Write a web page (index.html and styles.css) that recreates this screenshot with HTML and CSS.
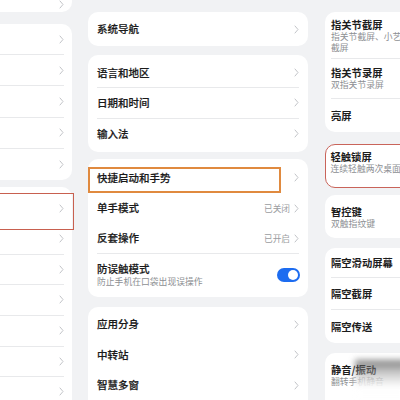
FILE: index.html
```html
<!DOCTYPE html>
<html lang="zh-CN">
<head>
<meta charset="utf-8">
<title>设置</title>
<link rel="stylesheet" href="styles.css">
</head>
<body>
<div class="screen">
  <!-- left panel (cut off) -->
  <div class="col col-left">
    <div class="card lc1">
      <div class="lrow"><svg class="chev" viewBox="0 0 5 9"><path d="M1 1L4 4.5L1 8"/></svg></div>
    </div>
    <div class="card lc2">
      <div class="lrow sep"><svg class="chev" viewBox="0 0 5 9"><path d="M1 1L4 4.5L1 8"/></svg></div>
      <div class="lrow sep"><svg class="chev" viewBox="0 0 5 9"><path d="M1 1L4 4.5L1 8"/></svg></div>
      <div class="lrow sep"><svg class="chev" viewBox="0 0 5 9"><path d="M1 1L4 4.5L1 8"/></svg></div>
      <div class="lrow sep"><svg class="chev" viewBox="0 0 5 9"><path d="M1 1L4 4.5L1 8"/></svg></div>
      <div class="lrow"><svg class="chev" viewBox="0 0 5 9"><path d="M1 1L4 4.5L1 8"/></svg></div>
    </div>
    <div class="card lc3">
      <div class="mark mark-left"></div>
      <div class="lrow h31"><svg class="chev" viewBox="0 0 5 9"><path d="M1 1L4 4.5L1 8"/></svg></div>
      <div class="lrow h31 sep"><svg class="chev" viewBox="0 0 5 9"><path d="M1 1L4 4.5L1 8"/></svg></div>
      <div class="lrow h30 sep"><svg class="chev" viewBox="0 0 5 9"><path d="M1 1L4 4.5L1 8"/></svg></div>
      <div class="lrow h31 sep"><svg class="chev" viewBox="0 0 5 9"><path d="M1 1L4 4.5L1 8"/></svg></div>
      <div class="lrow h31 sep"><svg class="chev" viewBox="0 0 5 9"><path d="M1 1L4 4.5L1 8"/></svg></div>
      <div class="lrow h30 sep"><svg class="chev" viewBox="0 0 5 9"><path d="M1 1L4 4.5L1 8"/></svg></div>
      <div class="lrow h30"><svg class="chev" viewBox="0 0 5 9"><path d="M1 1L4 4.5L1 8"/></svg></div>
    </div>
  </div>

  <!-- middle panel -->
  <div class="col col-mid">
    <div class="card mc1">
      <div class="mrow h34"><span class="label">系统导航</span><svg class="chev" viewBox="0 0 5 9"><path d="M1 1L4 4.5L1 8"/></svg></div>
    </div>
    <div class="card mc2">
      <div class="mrow h30 sep"><span class="label">语言和地区</span><svg class="chev" viewBox="0 0 5 9"><path d="M1 1L4 4.5L1 8"/></svg></div>
      <div class="mrow h30 sep"><span class="label">日期和时间</span><svg class="chev" viewBox="0 0 5 9"><path d="M1 1L4 4.5L1 8"/></svg></div>
      <div class="mrow h30"><span class="label">输入法</span><svg class="chev" viewBox="0 0 5 9"><path d="M1 1L4 4.5L1 8"/></svg></div>
    </div>
    <div class="card mc3">
      <div class="mark mark-mid"></div>
      <div class="mrow h30"><span class="label">快捷启动和手势</span><svg class="chev" viewBox="0 0 5 9"><path d="M1 1L4 4.5L1 8"/></svg></div>
      <div class="mrow h31"><span class="label">单手模式</span><span class="end"><span class="value">已关闭</span><svg class="chev" viewBox="0 0 5 9"><path d="M1 1L4 4.5L1 8"/></svg></span></div>
      <div class="mrow h30 sep"><span class="label">反套操作</span><span class="end"><span class="value">已开启</span><svg class="chev" viewBox="0 0 5 9"><path d="M1 1L4 4.5L1 8"/></svg></span></div>
      <div class="mrow h43">
        <span class="texts"><span class="label">防误触模式</span><span class="sub">防止手机在口袋出现误操作</span></span>
        <span class="toggle"><span class="knob"></span></span>
      </div>
    </div>
    <div class="card mc4">
      <div class="mrow h30"><span class="label">应用分身</span><svg class="chev" viewBox="0 0 5 9"><path d="M1 1L4 4.5L1 8"/></svg></div>
      <div class="mrow h30"><span class="label">中转站</span><svg class="chev" viewBox="0 0 5 9"><path d="M1 1L4 4.5L1 8"/></svg></div>
      <div class="mrow h30"><span class="label">智慧多窗</span><svg class="chev" viewBox="0 0 5 9"><path d="M1 1L4 4.5L1 8"/></svg></div>
    </div>
  </div>

  <!-- right panel (cut off) -->
  <div class="col col-right">
    <div class="card rc1">
      <div class="rrow r1 sep"><span class="title">指关节截屏</span><span class="sub">指关节截屏、小艺识屏、区域截屏<br>截屏</span></div>
      <div class="rrow r2 sep"><span class="title">指关节录屏</span><span class="sub">双指关节录屏</span></div>
      <div class="rrow r3"><span class="title">亮屏</span></div>
    </div>
    <div class="card rc2">
      <span class="title">轻触锁屏</span><span class="sub">连续轻触两次桌面空白处锁屏</span>
    </div>
    <div class="card rc3">
      <span class="title">智控键</span><span class="sub">双触指纹键</span>
    </div>
    <div class="card rc4">
      <div class="rrow d1 sep"><span class="title">隔空滑动屏幕</span></div>
      <div class="rrow d2 sep"><span class="title">隔空截屏</span></div>
      <div class="rrow d3"><span class="title">隔空传送</span></div>
    </div>
    <div class="card rc5">
      <span class="title">静音/振动</span><span class="sub">翻转手机静音</span>
    </div>
  </div>

  <div class="watermark"></div>
</div>
</body>
</html>
```
FILE: styles.css
```css
* { box-sizing: border-box; }
html, body {
  margin: 0;
  padding: 0;
  width: 400px;
  height: 400px;
  overflow: hidden;
  background: #f1f2f4;
}
.screen {
  position: relative;
  display: flex;
  width: 400px;
  height: 400px;
  overflow: hidden;
  font-family: "Noto Sans CJK SC", "Noto Sans", sans-serif;
  color: #1c1c1c;
}
.col { display: flex; flex-direction: column; flex-shrink: 0; }
.card { background: #fff; position: relative; }

/* chevron */
.chev {
  width: 5px;
  height: 9px;
  flex-shrink: 0;
  fill: none;
  stroke: #c2c4c8;
  stroke-width: 1;
  stroke-linecap: round;
  stroke-linejoin: round;
}

/* left panel */
.col-left { width: 72px; }
.lc1 { height: 25px; border-radius: 0 0 10px 0; display: flex; flex-direction: column; padding-bottom: 3px; justify-content: center; }
.lc2 { margin-top: 12px; height: 156px; border-radius: 0 10px 10px 0; }
.lc3 { margin-top: 7px; padding-top: 6px; border-radius: 0 10px 0 0; flex: 1; }
.lrow {
  display: flex;
  align-items: center;
  justify-content: flex-end;
  margin-right: 8px;
  height: 31.2px;
}
.lc1 .lrow { height: auto; }
.lrow.h31 { height: 31px; }
.lrow.h30 { height: 30px; }
.sep { border-bottom: 1px solid #e8e9eb; }

/* annotation marks */
.mark { position: absolute; pointer-events: none; }
.mark-left {
  top: 6px;
  left: -2px;
  width: 76px;
  height: 37px;
  border: 1.5px solid #c8604f;
}
.mark-mid {
  top: 8px;
  left: 0;
  width: 193px;
  height: 26px;
  border: 2px solid #e08a3f;
}

/* middle panel */
.col-mid { width: 220px; margin-left: 16px; padding-top: 12px; }
.col-mid .card { border-radius: 10px; }
.mc2 { margin-top: 9px; padding: 3px 0; }
.mc3 { margin-top: 7px; padding-top: 4px; }
.mc4 { margin-top: 10px; padding-top: 2px; flex: 1; border-radius: 10px 10px 0 0 !important; }
.mrow {
  display: flex;
  align-items: center;
  justify-content: space-between;
  margin: 0 9px;
}
.mrow.h34 { height: 34px; }
.mrow.h30 { height: 30.3px; }
.mrow.h31 { height: 31px; }
.mrow.h43 { height: 43px; }
.mc3 .mrow.h30 { height: 30px; }
.mc4 .mrow.h30 { height: 30.6px; }
.label {
  font-size: 10.5px;
  font-weight: 500;
  line-height: 12px;
  color: #1a1a1a;
  -webkit-text-stroke: 0.2px #1a1a1a;
}
.end { display: flex; align-items: center; gap: 4px; }
.value { font-size: 8.7px; color: #9a9ca0; line-height: 11px; }
.texts { display: flex; flex-direction: column; }
.texts .sub { margin-top: 1px; }
.sub {
  font-size: 8.8px;
  line-height: 11px;
  color: #8d8f93;
  white-space: nowrap;
}
.toggle {
  width: 23px;
  height: 14px;
  border-radius: 7px;
  background: #1d6cf0;
  display: flex;
  align-items: center;
  justify-content: flex-end;
  padding: 0 2px;
  margin-right: -1px;
}
.knob { width: 10px; height: 10px; border-radius: 50%; background: #fff; }

/* right panel */
.col-right { width: 100px; margin-left: 17px; padding-top: 12px; }
.col-right .card { border-radius: 10px 0 0 10px; }
.title {
  display: block;
  font-size: 10.3px;
  font-weight: 700;
  line-height: 12px;
  color: #1c1c1c;
  white-space: nowrap;
}
.col-right .sub { display: block; }
.rrow { margin-left: 6px; }
.rrow.r1 { height: 47px; padding-top: 7px; }
.rrow.r2 { height: 40px; padding-top: 8px; }
.rrow.r3 { height: 33px; display: flex; align-items: center; }
.rc2 {
  margin-top: 12px;
  height: 44px;
  padding: 5.5px 0 0 4.5px;
  border: 1.5px solid #c9645a;
}
.rc3 { margin-top: 7px; height: 43px; padding: 11px 0 0 6px; }
.rc4 { margin-top: 10px; }
.rrow.d1 { height: 30px; display: flex; align-items: center; }
.rrow.d2 { height: 32px; display: flex; align-items: center; }
.rrow.d3 { height: 33px; display: flex; align-items: center; }
.rc5 { margin-top: 10px; flex: 1; padding: 11px 0 0 6px; border-radius: 10px 0 0 0 !important; }

/* watermark smudge over bottom-right corner */
.watermark {
  position: absolute;
  left: 355px;
  top: 360px;
  width: 52px;
  height: 45px;
  background: linear-gradient(to bottom, rgba(70,70,70,0.7) 0%, rgba(150,150,150,0.5) 28%, rgba(255,255,255,0.96) 60%, #fff 100%);
  filter: blur(3px);
}
```
